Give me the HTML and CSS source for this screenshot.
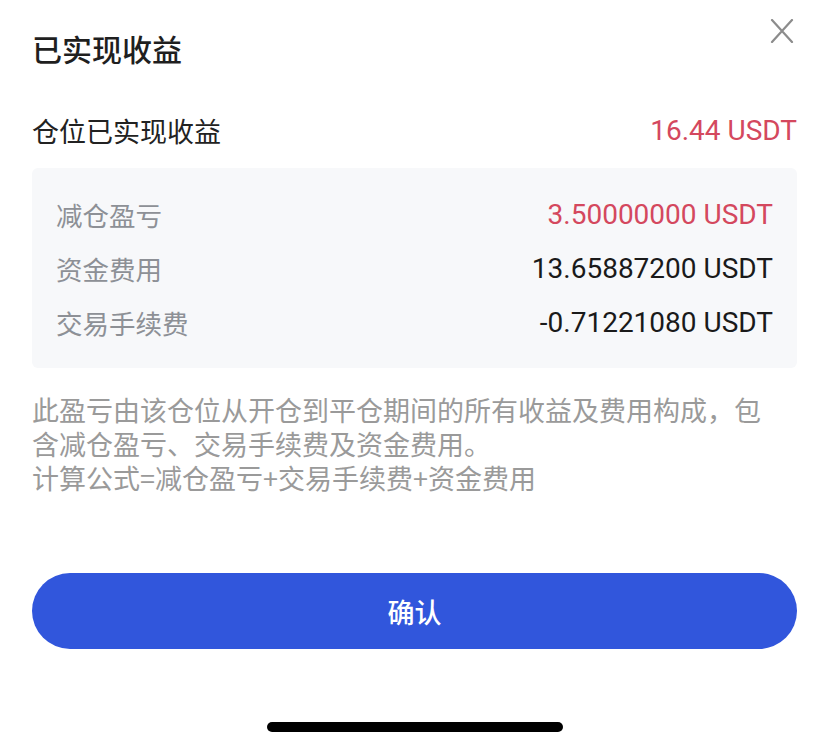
FILE: index.html
```html
<!DOCTYPE html>
<html lang="zh-CN">
<head>
    <meta charset="UTF-8">
    <title>已实现收益</title>
    <link rel="stylesheet" href="styles.css">
</head>
<body>
    <div class="sheet">
        <div class="header">
            <h1 class="title">已实现收益</h1>
            <button class="close" aria-label="关闭">
                <svg width="24" height="24" viewBox="0 0 24 24">
                    <path d="M2 1 L22 23 M22 1 L2 23" stroke="#8c8c8c" stroke-width="2.2" stroke-linecap="round" fill="none"/>
                </svg>
            </button>
        </div>

        <div class="total">
            <span class="total-label">仓位已实现收益</span>
            <span class="num red">16.44 USDT</span>
        </div>

        <div class="detail">
            <div class="row">
                <span class="label">减仓盈亏</span>
                <span class="num red">3.50000000 USDT</span>
            </div>
            <div class="row">
                <span class="label">资金费用</span>
                <span class="num">13.65887200 USDT</span>
            </div>
            <div class="row">
                <span class="label">交易手续费</span>
                <span class="num">-0.71221080 USDT</span>
            </div>
        </div>

        <p class="note">此盈亏由该仓位从开仓到平仓期间的所有收益及费用构成，包含减仓盈亏、交易手续费及资金费用。<br>计算公式=减仓盈亏+交易手续费+资金费用</p>

        <button class="confirm">确认</button>

        <div class="home-bar"></div>
    </div>
</body>
</html>
```

FILE: styles.css
```css
body {
    margin: 0;
    background-color: #fff;
    font-family: "Noto Sans CJK SC", Roboto, sans-serif;
}
.sheet {
    width: 828px;
    padding: 0 31px 0 32px;
    box-sizing: border-box;
}
.header {
    display: flex;
    justify-content: space-between;
    align-items: flex-start;
}
.title {
    margin: 28px 0 0;
    font-size: 30px;
    line-height: 40px;
    font-weight: 500;
    color: #1f1f1f;
}
.close {
    margin: 19px 3px 0 0;
    padding: 0;
    border: none;
    background: none;
    width: 24px;
    height: 24px;
    cursor: pointer;
}
.close svg {
    display: block;
}
.total {
    display: flex;
    justify-content: space-between;
    align-items: center;
    margin-top: 42px;
    height: 40px;
    font-size: 27px;
    color: #222;
}
.num {
    font-family: Roboto, "Noto Sans CJK SC", sans-serif;
    font-size: 28px;
    color: #1a1a1a;
}
.red {
    color: #d4485e;
}
.total .red {
    color: #d4485e;
}
.detail {
    margin-top: 18px;
    padding: 19px 24px;
    background-color: #f7f8fa;
    border-radius: 6px;
}
.row {
    display: flex;
    justify-content: space-between;
    align-items: center;
    height: 54px;
}
.label {
    font-size: 26.5px;
    color: #8d9096;
}
.note {
    margin: 25px 0 0;
    padding-right: 22px;
    font-size: 27px;
    line-height: 34px;
    color: #9a9a9a;
}
.confirm {
    display: block;
    width: 100%;
    height: 76px;
    margin-top: 78px;
    border: none;
    border-radius: 38px;
    background-color: #3156dc;
    color: #fff;
    font-family: "Noto Sans CJK SC", sans-serif;
    font-size: 27px;
    font-weight: 500;
    cursor: pointer;
}
.home-bar {
    width: 296px;
    height: 10px;
    margin: 73px auto 0;
    background-color: #000;
    border-radius: 5px;
}
```
